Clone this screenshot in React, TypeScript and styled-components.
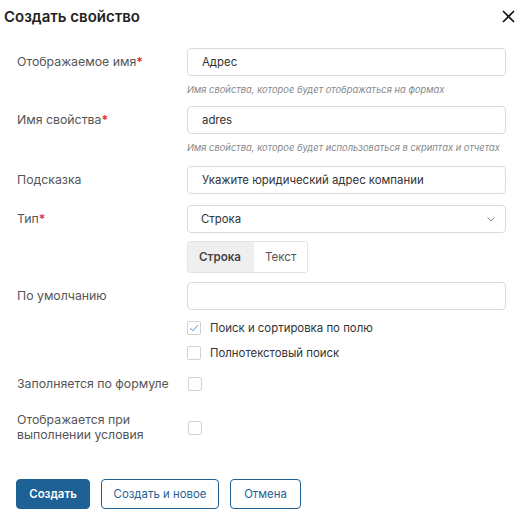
import React from "react";
import styled, { createGlobalStyle } from "styled-components";

const Global = createGlobalStyle`
  html, body { margin: 0; padding: 0; background: #fff; }
  body { font-family: Inter, "Noto Sans", Arial, sans-serif; color: #333; }
  * { box-sizing: border-box; }
`;

const Dialog = styled.div`
  width: 528px;
  height: 512px;
  background: #fff;
  display: flex;
  flex-direction: column;
`;

const Header = styled.div`
  height: 32px;
  display: flex;
  align-items: center;
  justify-content: space-between;
  padding: 0 13px 0 4px;
`;

const Title = styled.h1`
  margin: 0;
  font-size: 15px;
  font-weight: 600;
  color: #222;
`;

const CloseButton = styled.button`
  width: 14px;
  height: 14px;
  padding: 0;
  border: 0;
  background: none;
  display: flex;
  align-items: center;
  justify-content: center;
  cursor: pointer;
`;

const Body = styled.div`
  display: flex;
  flex-direction: column;
  padding: 0 22px 0 17px;
`;

const Row = styled.div<{ $top: number }>`
  display: grid;
  grid-template-columns: 170px 1fr;
  align-items: start;
  margin-top: ${(p) => p.$top}px;
`;

const Label = styled.div<{ $h: number }>`
  min-height: ${(p) => p.$h}px;
  display: flex;
  align-items: center;
  font-size: 12.3px;
  line-height: 14.5px;
  color: #555;
`;

const Req = styled.span`
  color: #e0312b;
  font-weight: 600;
`;

const Controls = styled.div`
  display: flex;
  flex-direction: column;
`;

const Input = styled.div<{ $h?: number }>`
  height: ${(p) => p.$h ?? 28}px;
  border: 1px solid #dadada;
  border-radius: 4px;
  padding: 0 14px;
  display: flex;
  align-items: center;
  font-size: 11.4px;
  color: #333;
`;

const Select = styled(Input)`
  padding: 0 10px 0 13px;
  justify-content: space-between;
`;

const Hint = styled.div`
  margin-top: 7px;
  font-size: 9.4px;
  line-height: 14px;
  font-style: italic;
  color: #888;
`;

const Segmented = styled.div`
  margin-top: 8px;
  display: inline-flex;
  align-self: flex-start;
  height: 32px;
  border: 1px solid #e3e3e3;
  border-radius: 3px;
  overflow: hidden;
`;

const Segment = styled.div<{ $active?: boolean }>`
  display: flex;
  align-items: center;
  padding: 0 0 0 ${(p) => (p.$active ? "11px" : "11px")};
  width: ${(p) => (p.$active ? "66px" : "53px")};
  font-size: 11.6px;
  font-weight: ${(p) => (p.$active ? 600 : 400)};
  color: ${(p) => (p.$active ? "#444" : "#555")};
  background: ${(p) => (p.$active ? "#efefef" : "#fff")};
`;

const CheckRow = styled.label<{ $top: number }>`
  margin-top: ${(p) => p.$top}px;
  height: 20px;
  display: flex;
  align-items: center;
  gap: 9px;
  font-size: 11.4px;
  color: #333;
`;

const Box = styled.span`
  width: 14px;
  height: 14px;
  border: 1px solid #d2d2d2;
  border-radius: 2px;
  background: #fff;
  display: flex;
  align-items: center;
  justify-content: center;
  flex: none;
`;

const BoxCell = styled.div<{ $h: number }>`
  height: ${(p) => p.$h}px;
  display: flex;
  align-items: center;
  padding-left: 1px;
`;

const Footer = styled.div`
  margin-top: 37px;
  padding: 0 16px;
  display: flex;
  gap: 11px;
`;

const Button = styled.button<{ $primary?: boolean; $w: number }>`
  height: 30px;
  width: ${(p) => p.$w}px;
  border-radius: 4px;
  border: 1px solid #1e6194;
  background: ${(p) => (p.$primary ? "#1e6194" : "#fff")};
  color: ${(p) => (p.$primary ? "#fff" : "#1e6194")};
  font-family: inherit;
  font-size: 11.4px;
  font-weight: ${(p) => (p.$primary ? 600 : 400)};
  padding: 0;
  cursor: pointer;
`;

const Check = () => (
  <svg width="10" height="8" viewBox="0 0 10 8">
    <path d="M1 4.2 L3.8 6.8 L9 1.2" fill="none" stroke="#4a8cc8" strokeWidth="1" />
  </svg>
);

export default function App() {
  return (
    <>
      <Global />
      <Dialog>
        <Header>
          <Title>Создать свойство</Title>
          <CloseButton aria-label="close">
            <svg width="13" height="13" viewBox="0 0 13 13">
              <path d="M1 1 L12 12 M12 1 L1 12" stroke="#111" strokeWidth="1.6" />
            </svg>
          </CloseButton>
        </Header>
        <Body>
          <Row $top={16}>
            <Label $h={28}>
              Отображаемое имя<Req>*</Req>
            </Label>
            <Controls>
              <Input>Адрес</Input>
              <Hint>Имя свойства, которое будет отображаться на формах</Hint>
            </Controls>
          </Row>
          <Row $top={9}>
            <Label $h={28}>
              Имя свойства<Req>*</Req>
            </Label>
            <Controls>
              <Input>adres</Input>
              <Hint>Имя свойства, которое будет использоваться в скриптах и отчетах</Hint>
            </Controls>
          </Row>
          <Row $top={11}>
            <Label $h={28}>Подсказка</Label>
            <Controls>
              <Input>Укажите юридический адрес компании</Input>
            </Controls>
          </Row>
          <Row $top={11}>
            <Label $h={28}>
              Тип<Req>*</Req>
            </Label>
            <Controls>
              <Select>
                <span>Строка</span>
                <svg width="8" height="5" viewBox="0 0 8 5">
                  <path d="M0.5 0.5 L4 4 L7.5 0.5" fill="none" stroke="#888" strokeWidth="1" />
                </svg>
              </Select>
              <Segmented>
                <Segment $active>Строка</Segment>
                <Segment>Текст</Segment>
              </Segmented>
            </Controls>
          </Row>
          <Row $top={9}>
            <Label $h={28}>По умолчанию</Label>
            <Controls>
              <Input />
              <CheckRow $top={8}>
                <Box>
                  <Check />
                </Box>
                Поиск и сортировка по полю
              </CheckRow>
              <CheckRow $top={5}>
                <Box />
                Полнотекстовый поиск
              </CheckRow>
            </Controls>
          </Row>
          <Row $top={11}>
            <Label $h={20}>Заполняется по формуле</Label>
            <BoxCell $h={20}>
              <Box />
            </BoxCell>
          </Row>
          <Row $top={19}>
            <Label $h={29}>
              Отображается при
              <br />
              выполнении условия
            </Label>
            <BoxCell $h={29}>
              <Box />
            </BoxCell>
          </Row>
        </Body>
        <Footer>
          <Button $primary $w={74}>Создать</Button>
          <Button $w={118}>Создать и новое</Button>
          <Button $w={71}>Отмена</Button>
        </Footer>
      </Dialog>
    </>
  );
}
